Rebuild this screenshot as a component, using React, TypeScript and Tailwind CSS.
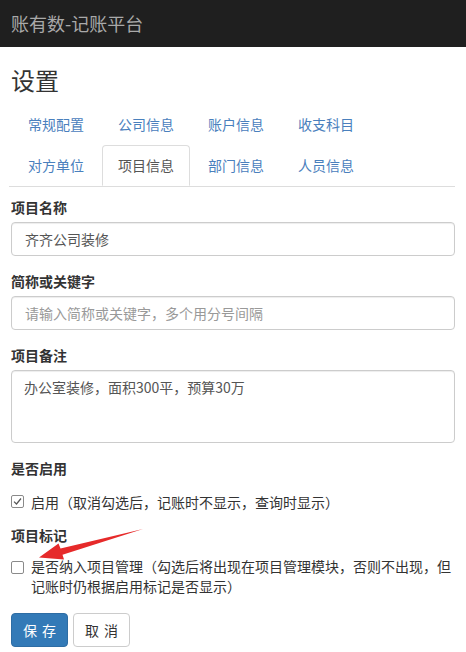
import React from "react";

const font = { fontFamily: '"Noto Sans CJK SC", "Liberation Sans", sans-serif' };

const tabsTop = ["常规配置", "公司信息", "账户信息", "收支科目"];
const tabsBottom = ["对方单位", "项目信息", "部门信息", "人员信息"];

const Tab = ({ label, active }: { label: string; active?: boolean }) => (
  <li
    className={
      "w-[88px] mr-[2px] h-[41px] flex items-center justify-center rounded-t border text-[14px] " +
      (active
        ? "bg-white border-[#ddd] border-b-white text-[#555] -mb-px"
        : "border-transparent text-[#4a80bd]")
    }
  >
    {label}
  </li>
);

const Checkbox = ({ checked }: { checked?: boolean }) => (
  <span className="mt-[3px] w-[13px] h-[13px] shrink-0 border border-[#8a8a8a] rounded-[2px] bg-white flex items-center justify-center">
    {checked && (
      <svg width="9" height="9" viewBox="0 0 9 9">
        <path d="M1 4.6 L3.5 7 L8 1.5" fill="none" stroke="#555" strokeWidth="1.2" />
      </svg>
    )}
  </span>
);

export default function App() {
  return (
    <div className="min-h-[652px] bg-white text-[14px] text-[#333] relative" style={font}>
      <div className="h-[47px] bg-[#1f1f1f] flex items-center px-[11px]">
        <span className="text-[18px] text-[#a9a9a9]">账有数-记账平台</span>
      </div>

      <div className="px-[11px]">
        <h1 className="mt-[20px] text-[24px] leading-[26px] text-[#333]">设置</h1>

        <ul className="mt-[11px] -ml-[2px] pl-[3px] flex flex-wrap border-b border-[#ddd]">
          {tabsTop.map((t) => (
            <Tab key={t} label={t} />
          ))}
          <li className="basis-full h-0" />
          {tabsBottom.map((t) => (
            <Tab key={t} label={t} active={t === "项目信息"} />
          ))}
        </ul>

        <form className="pt-[10px]">
          <div className="mb-[15px]">
            <label className="block font-bold leading-5 mb-[5px]">项目名称</label>
            <div className="h-[34px] border border-[#ccc] rounded shadow-[inset_0_1px_1px_rgba(0,0,0,0.075)] px-[13px] flex items-center text-[#555]">
              齐齐公司装修
            </div>
          </div>
          <div className="mb-[15px]">
            <label className="block font-bold leading-5 mb-[5px]">简称或关键字</label>
            <div className="h-[34px] border border-[#ccc] rounded shadow-[inset_0_1px_1px_rgba(0,0,0,0.075)] px-[13px] flex items-center text-[#999]">
              请输入简称或关键字，多个用分号间隔
            </div>
          </div>
          <div className="mb-[15px]">
            <label className="block font-bold leading-5 mb-[5px]">项目备注</label>
            <div className="h-[73px] border border-[#ccc] rounded shadow-[inset_0_1px_1px_rgba(0,0,0,0.075)] px-[12px] py-[6px] leading-5 text-[#555]">
              办公室装修，面积300平，预算30万
            </div>
          </div>
          <div className="mb-[13px]">
            <label className="block font-bold leading-5 mb-[5px]">是否启用</label>
            <div className="mt-[14px] flex gap-[7px] leading-5 text-[#333]">
              <Checkbox checked />
              <span>启用（取消勾选后，记账时不显示，查询时显示）</span>
            </div>
          </div>
          <div className="mb-[15px]">
            <label className="block font-bold leading-5 mb-[5px]">项目标记</label>
            <div className="mt-[11px] flex gap-[7px] leading-5 text-[#333]">
              <span className="mt-[2px] flex">
                <Checkbox />
              </span>
              <span>
                是否纳入项目管理（勾选后将出现在项目管理模块，否则不出现，但
                <br />
                记账时仍根据启用标记是否显示）
              </span>
            </div>
          </div>
          <div className="flex gap-[5px] mt-[17px]">
            <button type="button" className="w-[57px] h-[34px] rounded bg-[#337ab7] border border-[#2e6da4] text-white flex items-center justify-center gap-[5px]">
              <span>保</span>
              <span>存</span>
            </button>
            <button type="button" className="w-[57px] h-[34px] rounded bg-white border border-[#ccc] text-[#333] flex items-center justify-center gap-[5px]">
              <span>取</span>
              <span>消</span>
            </button>
          </div>
        </form>
      </div>

      <svg className="absolute left-0 top-0 pointer-events-none" width="466" height="652">
        <polygon
          points="143,529 62.5,554.8 64,559.5 39,557.5 58.5,543.5 60.5,548.5"
          fill="#e62a2a"
        />
      </svg>
    </div>
  );
}
